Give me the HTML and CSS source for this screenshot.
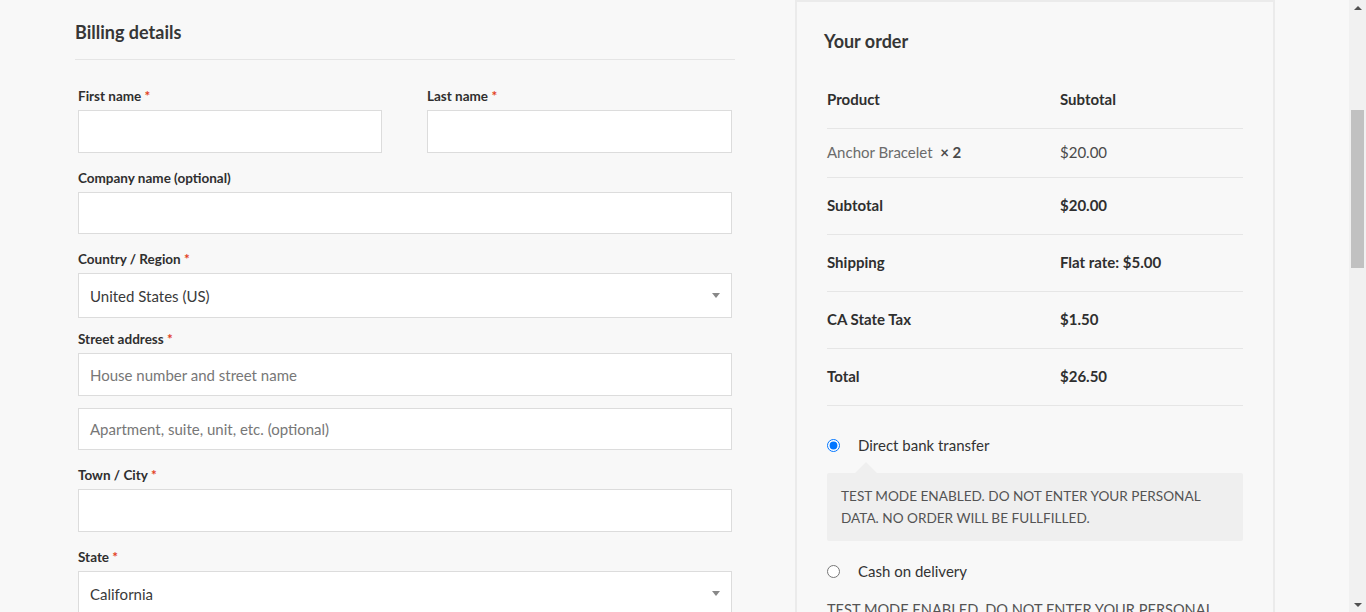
FILE: index.html
```html
<!DOCTYPE html>
<html lang="en">
<head>
<meta charset="utf-8">
<title>Checkout</title>
<link rel="stylesheet" href="styles.css">
</head>
<body>
<div class="viewport">
  <main class="page">
    <section class="billing">
      <h3 class="billing-title">Billing details</h3>
      <div class="fields">
        <div class="row-2">
          <div class="field">
            <label class="lbl">First name <abbr class="req">*</abbr></label>
            <div class="input h43"></div>
          </div>
          <div class="field">
            <label class="lbl">Last name <abbr class="req">*</abbr></label>
            <div class="input h43"></div>
          </div>
        </div>
        <div class="field">
          <label class="lbl">Company name (optional)</label>
          <div class="input h42"></div>
        </div>
        <div class="field field-select">
          <label class="lbl">Country / Region <abbr class="req">*</abbr></label>
          <div class="input select h45"><span class="val">United States (US)</span><span class="arrow"></span></div>
        </div>
        <div class="field field-street">
          <label class="lbl">Street address <abbr class="req">*</abbr></label>
          <div class="input h43"><span class="ph">House number and street name</span></div>
          <div class="input h42 apt"><span class="ph">Apartment, suite, unit, etc. (optional)</span></div>
        </div>
        <div class="field">
          <label class="lbl">Town / City <abbr class="req">*</abbr></label>
          <div class="input h43"></div>
        </div>
        <div class="field">
          <label class="lbl">State <abbr class="req">*</abbr></label>
          <div class="input select h45"><span class="val">California</span><span class="arrow"></span></div>
        </div>
      </div>
    </section>

    <aside class="order">
      <h3 class="order-title">Your order</h3>
      <table class="order-table">
        <thead>
          <tr><th class="c1">Product</th><th>Subtotal</th></tr>
        </thead>
        <tbody>
          <tr class="item"><td class="c1 name">Anchor Bracelet&nbsp; <strong>×&nbsp;2</strong></td><td class="amt">$20.00</td></tr>
        </tbody>
        <tfoot>
          <tr><th class="c1">Subtotal</th><td class="strong">$20.00</td></tr>
          <tr><th class="c1">Shipping</th><td class="strong">Flat rate: $5.00</td></tr>
          <tr><th class="c1">CA State Tax</th><td class="strong">$1.50</td></tr>
          <tr><th class="c1">Total</th><td class="strong">$26.50</td></tr>
        </tfoot>
      </table>
      <ul class="methods">
        <li class="method first">
          <label class="method-label"><input type="radio" name="pm" checked> <span>Direct bank transfer</span></label>
          <div class="pay-box">TEST MODE ENABLED. DO NOT ENTER YOUR PERSONAL DATA. NO ORDER WILL BE FULLFILLED.</div>
        </li>
        <li class="method second">
          <label class="method-label"><input type="radio" name="pm"> <span>Cash on delivery</span></label>
          <div class="pay-text">TEST MODE ENABLED. DO NOT ENTER YOUR PERSONAL DATA. NO ORDER WILL BE FULLFILLED.</div>
        </li>
      </ul>
    </aside>
  </main>
  <div class="scrollbar">
    <span class="sb-up"></span>
    <div class="sb-track"><div class="sb-thumb"></div></div>
    <span class="sb-down"></span>
  </div>
</div>
</body>
</html>
```

FILE: styles.css
```css
* { box-sizing: border-box; }
html, body { margin: 0; padding: 0; }
body {
  background: #f8f8f8;
  font-family: Lato, "Open Sans", sans-serif;
  color: #333;
  overflow: hidden;
  height: 612px;
}
.viewport {
  display: flex;
  height: 612px;
  overflow: hidden;
}
.page {
  flex: 1;
  display: flex;
  align-items: flex-start;
  padding-left: 75px;
  gap: 60px;
}
.billing {
  width: 660px;
  padding-top: 20px;
}
.billing-title {
  margin: 0;
  font-size: 18px;
  line-height: 24px;
  font-weight: 700;
  color: #363636;
  padding-bottom: 15px;
  border-bottom: 1px solid #e5e5e5;
}
.fields {
  padding: 26px 3px 0;
}
.row-2 {
  display: grid;
  grid-template-columns: 304px 305px;
  justify-content: space-between;
}
.field { margin-bottom: 15px; }
.field-select { margin-bottom: 11px; }
.lbl {
  display: block;
  font-size: 13.5px;
  line-height: 20px;
  font-weight: 700;
  color: #2f2f2f;
  margin-bottom: 4px;
}
.req {
  color: #e2401c;
  text-decoration: none;
  border: 0;
  font-weight: 700;
}
.input {
  background: #fff;
  border: 1px solid #dcdcdc;
  display: flex;
  align-items: center;
  padding: 0 11px;
  font-size: 15px;
  color: #444;
}
.h43 { height: 43px; }
.h42 { height: 42px; }
.h45 { height: 45px; }
.apt { margin-top: 12px; }
.ph { color: #777; }
.val { color: #3a3a3a; }
.select { justify-content: space-between; }
.arrow {
  width: 0; height: 0;
  border-left: 4px solid transparent;
  border-right: 4px solid transparent;
  border-top: 5px solid #888;
}

.order {
  width: 480px;
  border: 2px solid #ebebeb;
  border-bottom: 0;
  padding: 27px 30px 0 27px;
  height: 640px;
}
.order-title {
  margin: 0 0 17px;
  font-size: 18px;
  line-height: 24px;
  font-weight: 700;
  color: #363636;
}
.order-table {
  width: 416px;
  margin: 0 0 0 3px;
  border-collapse: collapse;
  font-size: 15px;
  line-height: 22px;
}
.order-table th, .order-table td {
  text-align: left;
  padding: 16px 0 18px;
  border-bottom: 1px solid #e6e6e6;
  vertical-align: top;
}
.order-table thead th { padding: 18px 0 18px; font-weight: 700; color: #2f2f2f; }
.order-table .c1 { width: 233px; }
.order-table tr.item td { padding: 12px 0 14px; }
.order-table .name { color: #6b6b6b; }
.order-table .name strong { color: #4a4a4a; font-weight: 700; }
.order-table .amt { color: #4a4a4a; }
.order-table tfoot th { font-weight: 700; color: #2f2f2f; }
.order-table .strong { font-weight: 700; color: #2f2f2f; }

.methods {
  list-style: none;
  margin: 0;
  padding: 0 0 0 3px;
  width: 419px;
}
.method-label {
  display: flex;
  align-items: center;
  font-size: 15px;
  line-height: 22px;
  color: #333;
}
.method-label input {
  margin: 0 18px 0 0;
  width: 13px;
  height: 13px;
}
.method.first { padding-top: 28px; }
.pay-box {
  position: relative;
  margin-top: 17px;
  background: #efefef;
  border-radius: 2px;
  padding: 12px 14px;
  font-size: 13.6px;
  line-height: 22px;
  color: #545454;
  text-transform: uppercase;
}
.pay-box::before {
  content: "";
  position: absolute;
  left: 28px;
  top: -11px;
  border-left: 11px solid transparent;
  border-right: 11px solid transparent;
  border-bottom: 11px solid #efefef;
}
.method.second { padding-top: 19px; }
.pay-text {
  margin-top: 17px;
  font-size: 14.6px;
  line-height: 22px;
  color: #545454;
  text-transform: uppercase;
}

.scrollbar {
  width: 17px;
  flex: none;
  background: #f1f1f1;
  display: flex;
  flex-direction: column;
  align-items: center;
  height: 612px;
}
.sb-up, .sb-down {
  width: 0; height: 0;
  border-left: 4px solid transparent;
  border-right: 4px solid transparent;
  flex: none;
}
.sb-up { border-bottom: 4px solid #505050; margin-top: 6px; }
.sb-down { border-top: 4px solid #505050; margin-bottom: 5px; }
.sb-track {
  flex: 1;
  width: 100%;
  padding: 100px 2px 0;
}
.sb-thumb {
  height: 158px;
  background: #c1c1c1;
}
```
